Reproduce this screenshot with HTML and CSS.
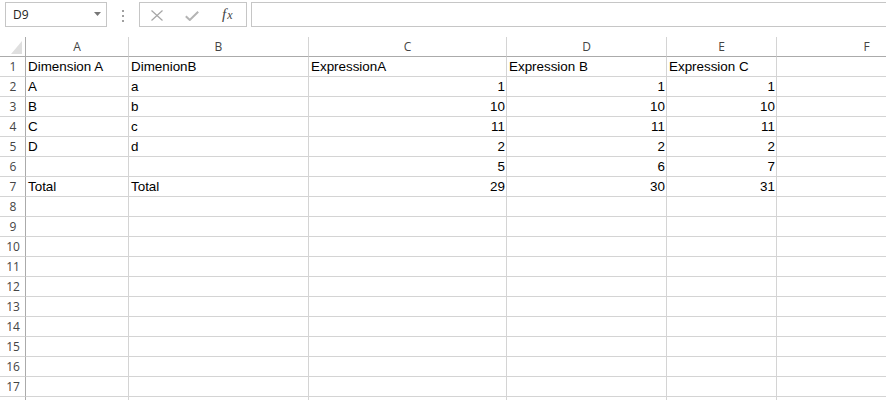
FILE: index.html
```html
<!DOCTYPE html>
<html>
<head>
<meta charset="utf-8">
<link rel="stylesheet" href="styles.css">
</head>
<body>
<div class="toolbar">
  <div class="namebox">
    <span class="name">D9</span>
    <svg class="caret" width="7" height="4" viewBox="0 0 7 4"><polygon points="0,0 7,0 3.5,4" fill="#777"/></svg>
  </div>
  <div class="grip"><span></span><span></span><span></span></div>
  <div class="buttons">
    <svg class="btn-x" width="12" height="11" viewBox="0 0 12 11"><path d="M0.5 0.5 L11.5 10.5 M11.5 0.5 L0.5 10.5" stroke="#a6a6a6" stroke-width="1.2" fill="none"/></svg>
    <svg class="btn-ok" width="14" height="10" viewBox="0 0 14 10"><path d="M0.8 5.2 L4.8 9 L13.2 0.8" stroke="#b4b4b4" stroke-width="2" fill="none"/></svg>
    <span class="fx"><i>f</i><i class="sub">x</i></span>
  </div>
  <div class="formula"></div>
</div>
<div class="sheet">
  <div class="corner"><svg width="11" height="13" viewBox="0 0 11 13"><polygon points="11,0 11,13 0,13" fill="#dfdfdf"/></svg></div>
  <div class="ch">A</div><div class="ch">B</div><div class="ch">C</div><div class="ch">D</div><div class="ch">E</div><div class="ch">F</div>

  <div class="rh">1</div><div class="c">Dimension A</div><div class="c">DimenionB</div><div class="c">ExpressionA</div><div class="c">Expression B</div><div class="c">Expression C</div><div class="c"></div>
  <div class="rh">2</div><div class="c">A</div><div class="c">a</div><div class="c n">1</div><div class="c n">1</div><div class="c n">1</div><div class="c"></div>
  <div class="rh">3</div><div class="c">B</div><div class="c">b</div><div class="c n">10</div><div class="c n">10</div><div class="c n">10</div><div class="c"></div>
  <div class="rh">4</div><div class="c">C</div><div class="c">c</div><div class="c n">11</div><div class="c n">11</div><div class="c n">11</div><div class="c"></div>
  <div class="rh">5</div><div class="c">D</div><div class="c">d</div><div class="c n">2</div><div class="c n">2</div><div class="c n">2</div><div class="c"></div>
  <div class="rh">6</div><div class="c"></div><div class="c"></div><div class="c n">5</div><div class="c n">6</div><div class="c n">7</div><div class="c"></div>
  <div class="rh">7</div><div class="c">Total</div><div class="c">Total</div><div class="c n">29</div><div class="c n">30</div><div class="c n">31</div><div class="c"></div>
  <div class="rh">8</div><div class="c"></div><div class="c"></div><div class="c"></div><div class="c"></div><div class="c"></div><div class="c"></div>
  <div class="rh">9</div><div class="c"></div><div class="c"></div><div class="c"></div><div class="c"></div><div class="c"></div><div class="c"></div>
  <div class="rh">10</div><div class="c"></div><div class="c"></div><div class="c"></div><div class="c"></div><div class="c"></div><div class="c"></div>
  <div class="rh">11</div><div class="c"></div><div class="c"></div><div class="c"></div><div class="c"></div><div class="c"></div><div class="c"></div>
  <div class="rh">12</div><div class="c"></div><div class="c"></div><div class="c"></div><div class="c"></div><div class="c"></div><div class="c"></div>
  <div class="rh">13</div><div class="c"></div><div class="c"></div><div class="c"></div><div class="c"></div><div class="c"></div><div class="c"></div>
  <div class="rh">14</div><div class="c"></div><div class="c"></div><div class="c"></div><div class="c"></div><div class="c"></div><div class="c"></div>
  <div class="rh">15</div><div class="c"></div><div class="c"></div><div class="c"></div><div class="c"></div><div class="c"></div><div class="c"></div>
  <div class="rh">16</div><div class="c"></div><div class="c"></div><div class="c"></div><div class="c"></div><div class="c"></div><div class="c"></div>
  <div class="rh">17</div><div class="c"></div><div class="c"></div><div class="c"></div><div class="c"></div><div class="c"></div><div class="c"></div>
  <div class="rh"></div><div class="c"></div><div class="c"></div><div class="c"></div><div class="c"></div><div class="c"></div><div class="c"></div>
</div>
</body>
</html>
```
FILE: styles.css
```css
html, body {
  margin: 0;
  padding: 0;
  background: #fff;
  overflow: hidden;
  width: 886px;
  height: 400px;
}

.toolbar {
  display: flex;
  align-items: flex-start;
  height: 37px;
  padding-top: 2px;
  box-sizing: border-box;
  overflow: hidden;
  font-family: "Open Sans", "Liberation Sans", sans-serif;
}

.namebox {
  margin-left: 5px;
  width: 102px;
  height: 25px;
  box-sizing: border-box;
  border: 1px solid #c6c6c6;
  display: flex;
  align-items: center;
  justify-content: space-between;
  padding: 0 5px 0 7px;
}

.name {
  font-size: 12px;
  line-height: 23px;
  color: #222;
}

.caret {
  margin-top: -2px;
}

.grip {
  width: 32px;
  height: 25px;
  display: flex;
  flex-direction: column;
  align-items: center;
  padding-top: 8px;
  box-sizing: border-box;
  gap: 3px;
}

.grip span {
  width: 2px;
  height: 2px;
  background: #a0a0a0;
}

.buttons {
  width: 108px;
  height: 25px;
  box-sizing: border-box;
  border: 1px solid #c6c6c6;
  display: flex;
  align-items: center;
  padding-left: 11px;
}

.btn-x {
  margin-top: 1px;
}

.btn-ok {
  margin-left: 22px;
  margin-top: 2px;
}

.fx {
  margin-left: 23px;
  font-family: "Liberation Serif", serif;
  font-size: 15px;
  color: #444;
  line-height: 20px;
}

.fx .sub {
  font-size: 12px;
  margin-left: 1px;
}

.formula {
  margin-left: 4px;
  flex: 1;
  height: 25px;
  box-sizing: border-box;
  border: 1px solid #c6c6c6;
  border-right: none;
}

.sheet {
  display: grid;
  grid-template-columns: 26px 103px 180px 198px 160px 110px 180px;
  grid-auto-rows: 20px;
  width: 886px;
  height: 363px;
  overflow: hidden;
}

.sheet > div {
  box-sizing: border-box;
  border-right: 1px solid #d4d4d4;
  border-bottom: 1px solid #d4d4d4;
  overflow: hidden;
  white-space: nowrap;
}

.sheet > .corner {
  border-right-color: #ababab;
  border-bottom-color: #ababab;
  display: flex;
  align-items: flex-end;
  justify-content: flex-end;
  padding: 0 3px 2px 0;
}

.corner svg {
  display: block;
}

.sheet > .ch {
  border-bottom-color: #ababab;
  text-align: center;
  font-family: "Open Sans", "Liberation Sans", sans-serif;
  font-size: 12px;
  line-height: 19px;
  color: #444;
}

.sheet > .rh {
  border-right-color: #ababab;
  text-align: center;
  font-family: "Open Sans", "Liberation Sans", sans-serif;
  font-size: 12px;
  line-height: 19px;
  color: #444;
  padding-left: 1px;
}

.sheet > .c {
  font-family: "Liberation Sans", Arial, sans-serif;
  font-size: 13.4px;
  line-height: 18px;
  padding: 1px 1px 0 2px;
  color: #000;
}

.sheet > .n {
  text-align: right;
}
```
